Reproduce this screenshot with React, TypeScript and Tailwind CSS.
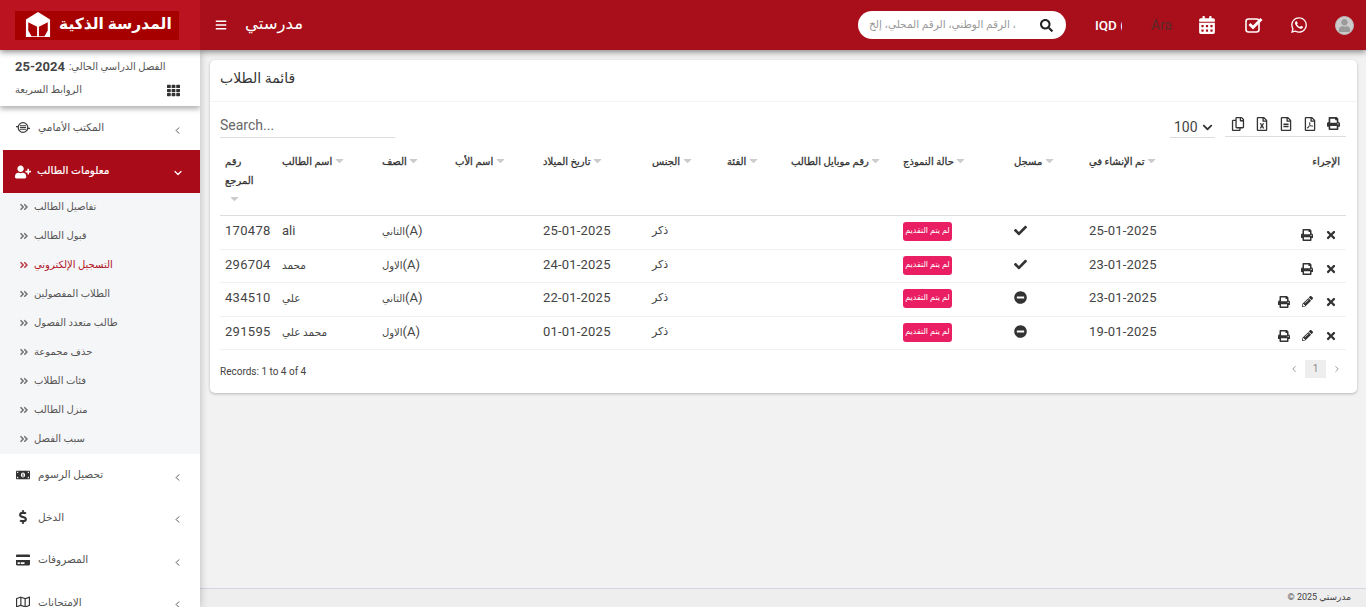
import React from "react";
import {
  FaPrint, FaTimes, FaPencilAlt, FaCheck, FaMinusCircle, FaSearch, FaBars, FaCalendarAlt, FaWhatsapp,
  FaRegCopy, FaRegFileExcel, FaRegFileAlt, FaRegFilePdf, FaTh, FaUserPlus, FaMoneyBillAlt, FaDollarSign,
  FaCreditCard, FaRegMap, FaAngleDoubleRight, FaUser, FaChevronDown, FaCaretDown,
} from "react-icons/fa";
import { ChevronLeft, ChevronRight, ChevronDown } from "lucide-react";

const font = "font-['Roboto','DejaVu_Sans',sans-serif]";

function Logo() {
  return (
    <svg viewBox="0 0 28 28" className="w-[26px] h-[26px]">
      <path d="M14 0 L27 8 V27 H1 V8 Z" fill="#fff" />
      <path d="M3.5 11 L13 16 V26 H7 L3.5 20 Z M24.5 11 L15 16 V26 H21 L24.5 20 Z" fill="#a80000" />
    </svg>
  );
}

function CheckBox() {
  return (
    <svg viewBox="0 0 18 16" className="w-[18px] h-[16px]">
      <rect x="1" y="2" width="13" height="13" rx="2.5" fill="none" stroke="#fff" strokeWidth="1.6" />
      <path d="M4.5 7 L8 10.5 L16.5 2" fill="none" stroke="#fff" strokeWidth="3" />
    </svg>
  );
}

function FrontOffice() {
  return (
    <svg viewBox="0 0 16 14" className="w-[14px] h-[13px]" fill="none" stroke="#3a3a3a">
      <circle cx="8" cy="7" r="5.5" strokeWidth="1.4" />
      <path d="M4.5 5h7M4.5 7h7M4.5 9h7" strokeWidth="1.2" />
      <path d="M0 6h3M13 8h3" strokeWidth="1.4" />
    </svg>
  );
}

const subItems = [
  "تفاصيل الطالب",
  "قبول الطالب",
  "التسجيل الإلكتروني",
  "الطلاب المفصولين",
  "طالب متعدد الفصول",
  "حذف مجموعة",
  "فئات الطلاب",
  "منزل الطالب",
  "سبب الفصل",
];

function NavItem({ icon, label }: { icon: React.ReactNode; label: string }) {
  return (
    <div className="h-[42.5px] pl-[15px] pr-[17px] flex items-center text-[#555]">
      <span className="w-[15px] flex justify-center text-[14px] text-[#333] -mt-[1px]">{icon}</span>
      <span className="ml-[8px] text-[10.5px] flex-1">{label}</span>
      <ChevronLeft size={11} strokeWidth={2} className="text-[#444] mt-[4px]" />
    </div>
  );
}

function Sidebar() {
  return (
    <aside className="w-[200px] shrink-0 bg-white shadow-[0_0_8px_rgba(0,0,0,0.25)] z-10 overflow-hidden">
      <div className="h-[56px] pl-[15px] pr-[20px] pt-[8px] bg-white shadow-[0_3px_5px_rgba(0,0,0,0.3)] relative">
        <div className="text-[10px] leading-[17px] text-[#555] flex items-center gap-[4px]">
          <span className="text-[13px] font-bold text-[#444]">25-2024</span>
          <span dir="rtl">الفصل الدراسي الحالي:</span>
        </div>
        <div className="flex items-center justify-between mt-[8px] text-[10px] leading-[14px] text-[#555]">
          <span dir="rtl">الروابط السريعة</span>
          <FaTh className="text-[13px] text-[#333]" />
        </div>
      </div>
      <div className="h-[44px] pl-[15px] pr-[17px] flex items-center text-[#555]">
        <span className="w-[15px] flex justify-center -mt-[1px]"><FrontOffice /></span>
        <span className="ml-[8px] text-[10.5px] flex-1">المكتب الأمامي</span>
        <ChevronLeft size={11} strokeWidth={2} className="text-[#444] mt-[5px]" />
      </div>
      <div className="ml-[3px] h-[43px] bg-[#a90b18] text-white pl-[12px] pr-[16px] flex items-center">
        <FaUserPlus className="text-[16px]" />
        <span className="ml-[6px] text-[10.5px] [-webkit-text-stroke:0.2px_#fff] -mt-[1px] flex-1">معلومات الطالب</span>
        <ChevronDown size={12} strokeWidth={2.4} className="mt-[3px]" />
      </div>
      <div className="bg-[#f5f6f8] h-[261px]">
        {subItems.map((s, i) => (
          <div key={s} className={`h-[29px] pl-[19px] flex items-center gap-[4px] text-[10px] ${i === 2 ? "text-[#b0121e]" : "text-[#555]"}`}>
            <FaAngleDoubleRight className="text-[10px] -mt-[2px] opacity-80" />
            <span className="-mt-[2px] ml-[1px]">{s}</span>
          </div>
        ))}
      </div>
      <NavItem icon={<FaMoneyBillAlt />} label="تحصيل الرسوم" />
      <NavItem icon={<FaDollarSign />} label="الدخل" />
      <NavItem icon={<FaCreditCard />} label="المصروفات" />
      <NavItem icon={<FaRegMap />} label="الإمتحانات" />
    </aside>
  );
}

function Header() {
  return (
    <header className="h-[50px] flex shrink-0 bg-[#a90f1b] text-white shadow-[0_2px_6px_rgba(0,0,0,0.45)] z-20 relative">
      <div className="w-[200px] bg-[#bb1320] flex items-center pl-[15px]">
        <div className="w-[164px] h-[29px] bg-[#a60000] flex items-center pl-[10px] gap-[8px]">
          <Logo />
          <span className="text-[15.5px] font-bold leading-none whitespace-nowrap">المدرسة الذكية</span>
        </div>
      </div>
      <div className="flex-1 flex items-center pl-[15px]">
        <FaBars className="text-[12px]" />
        <span className="ml-[18px] text-[16.5px] font-medium -mt-[1px]">مدرستي</span>
        <div className="ml-auto w-[208px] h-[28px] rounded-full bg-white flex items-center pl-[11px] pr-[13px] mr-[29px]">
          <div className="w-[147px] overflow-hidden text-[10.5px] text-[#999]" dir="ltr">
            <span className="inline-block whitespace-nowrap">البحث بالعنوان، الرقم الوطني، الرقم المحلي، إلخ</span>
          </div>
          <FaSearch className="ml-auto text-[13px] text-[#222]" />
        </div>
        <span className="w-[27px] overflow-hidden text-[13.5px] font-medium whitespace-nowrap">IQD (</span>
        <span className="ml-[29px] w-[21px] overflow-hidden text-[14px] text-[#5a2a2a] whitespace-nowrap">Arabic</span>
        <FaCalendarAlt className="ml-[26px] text-[18px]" />
        <span className="ml-[29px]"><CheckBox /></span>
        <FaWhatsapp className="ml-[27px] text-[18px]" />
        <span className="ml-[27px] mr-[12px] w-[19px] h-[19px] rounded-full bg-[#ccc] flex items-center justify-center overflow-hidden border border-[#bbb]">
          <FaUser className="text-[13px] text-[#9a9a9a]" />
        </span>
      </div>
    </header>
  );
}

const cols = [
  { w: 57, label: "رقم المرجع" },
  { w: 100, label: "اسم الطالب" },
  { w: 73, label: "الصف" },
  { w: 88, label: "اسم الأب" },
  { w: 109, label: "تاريخ الميلاد" },
  { w: 75, label: "الجنس" },
  { w: 64, label: "الفئة" },
  { w: 112, label: "رقم موبايل الطالب" },
  { w: 111, label: "حالة النموذج" },
  { w: 75, label: "مسجل" },
  { w: 262, label: "تم الإنشاء في" },
];

const rows = [
  { ref: "170478", name: "ali", cls: "الثاني", dob: "25-01-2025", on: true, at: "25-01-2025", edit: false },
  { ref: "296704", name: "محمد", cls: "الاول", dob: "24-01-2025", on: true, at: "23-01-2025", edit: false },
  { ref: "434510", name: "علي", cls: "الثاني", dob: "22-01-2025", on: false, at: "23-01-2025", edit: true },
  { ref: "291595", name: "محمد علي", cls: "الاول", dob: "01-01-2025", on: false, at: "19-01-2025", edit: true },
];

function Caret() {
  return <FaCaretDown className="inline-block -ml-[2px] text-[13px] text-[#ccc] align-[-2px]" />;
}

function Table() {
  return (
    <table className="w-[1126px] mx-[10px] table-fixed border-collapse text-[#444]">
      <colgroup>
        {cols.map((c) => <col key={c.label} style={{ width: c.w }} />)}
      </colgroup>
      <thead>
        <tr className="h-[65px] border-b border-[#ddd] align-top">
          {cols.map((c, i) => (
            <th key={c.label} className={`pl-[5px] text-left text-[10px] font-normal text-[#333] [-webkit-text-stroke:0.3px_#333] ${i === 0 ? "pt-[2px] leading-[19px] pr-[2px]" : "pt-[4px] leading-[16px] whitespace-nowrap"}`}>
              {i === 0 ? (
                <>
                  <div>رقم</div>
                  <div>المرجع</div>
                  <div className="pl-[5px]"><Caret /></div>
                </>
              ) : (
                <><span>{c.label} </span><Caret /></>
              )}
              {i === 10 && <span className="float-right mr-[6px]">الإجراء</span>}
            </th>
          ))}
        </tr>
      </thead>
      <tbody>
        {rows.map((r, i) => (
          <tr key={r.ref} className={`border-b border-[#f1f1f1] text-[13px] align-top ${i % 2 === 0 ? "h-[34px]" : "h-[33px]"}`}>
            <td className="pl-[5px] pt-[5px] tracking-[0.3px]">{r.ref}</td>
            <td className="pl-[5px] pt-[5px]">
              {r.name === "ali" ? r.name : <span className="text-[10.5px]">{r.name}</span>}
            </td>
            <td className="pl-[5px] pt-[5px]"><span className="text-[10px]">{r.cls}</span>(A)</td>
            <td />
            <td className="pl-[5px] pt-[5px] tracking-[0.2px]">{r.dob}</td>
            <td className="pl-[5px] pt-[7px] text-[11px]">ذكر</td>
            <td />
            <td />
            <td className="pl-[5px] pt-[6px]">
              <span className="flex items-center justify-center w-[49px] h-[19px] rounded-[3px] bg-[#e91e63] text-white text-[8px] leading-none">لم يتم التقديم</span>
            </td>
            <td className="pl-[5px] pt-[8px] text-[#333]">
              {r.on ? <FaCheck className="text-[13px]" /> : <FaMinusCircle className="text-[13px]" />}
            </td>
            <td className="pl-[5px] pt-[5px] relative tracking-[0.2px]">
              {r.at}
              <span className="absolute right-[9px] top-[13px] flex items-center gap-[12px] text-[#333]">
                <FaPrint className="text-[12px]" />
                {r.edit && <FaPencilAlt className="text-[11px]" />}
                <FaTimes className="text-[12px]" />
              </span>
            </td>
          </tr>
        ))}
      </tbody>
    </table>
  );
}

function Card() {
  return (
    <section className="bg-white rounded-[5px] h-[333px] shadow-[0_1px_3px_rgba(0,0,0,0.25)]">
      <div className="h-[42px] border-b border-[#f4f4f4] flex items-center px-[10px]">
        <h1 className="text-[14px] font-normal text-[#333] -mt-[4px]">قائمة الطلاب</h1>
      </div>
      <div className="flex items-start pl-[10px] pr-[11px] pt-[13px] h-[48px]">
        <div className="w-[175px] h-[23px] border-b border-[#ddd] text-[14px] leading-[21px] text-[#666]">Search...</div>
        <div className="ml-auto w-[45px] h-[20px] border-b border-[#ddd] flex items-center justify-between text-[14px] text-[#444] pl-[4px] pr-[2px] mt-[3px]">
          100 <FaChevronDown className="text-[11px] text-[#333]" />
        </div>
        <div className="ml-[10px] w-[121px] h-[21px] border-b border-[#ddd] flex items-start justify-between pl-[6px] pr-[6px] pt-[1px] text-[#333] mt-[1px]">
          <FaRegCopy className="text-[14px]" />
          <FaRegFileExcel className="text-[14px]" />
          <FaRegFileAlt className="text-[14px]" />
          <FaRegFilePdf className="text-[14px]" />
          <FaPrint className="text-[13px]" />
        </div>
      </div>
      <Table />
      <div className="flex items-start px-[10px] mt-[10px]">
        <span className="text-[10px] text-[#444] mt-[4px]">Records: 1 to 4 of 4</span>
        <div className="ml-auto flex items-center text-[#888] text-[10px] mr-[5px]">
          <ChevronLeft size={10} />
          <span className="ml-[6px] w-[21px] h-[18px] bg-[#eee] flex items-center justify-center">1</span>
          <ChevronRight size={10} className="ml-[6px]" />
        </div>
      </div>
    </section>
  );
}

export default function App() {
  return (
    <div className={`h-[607px] w-[1366px] flex flex-col overflow-hidden bg-[#f2f2f2] ${font}`}>
      <Header />
      <div className="flex flex-1 min-h-0">
        <Sidebar />
        <main className="flex-1 flex flex-col min-w-0">
          <div className="flex-1 pt-[10px] pl-[10px] pr-[9px]">
            <Card />
          </div>
          <footer dir="rtl" className="h-[19px] border-t border-[#d2d6de] flex items-center pr-[15px] text-[9px] text-[#444] bg-[#eee]">
            مدرستي 2025 ©
          </footer>
        </main>
      </div>
    </div>
  );
}
